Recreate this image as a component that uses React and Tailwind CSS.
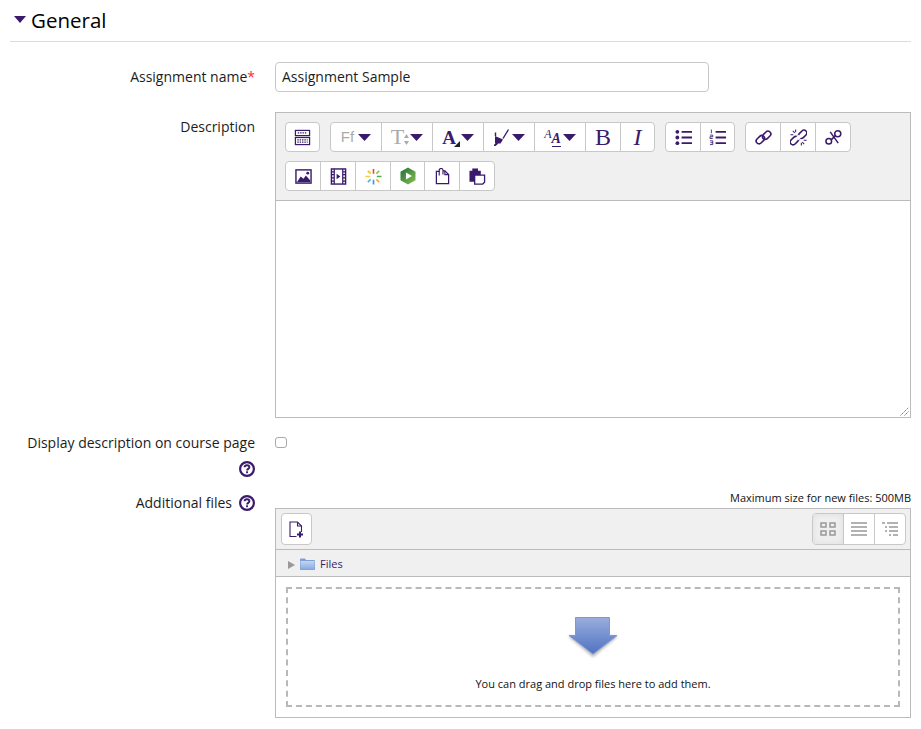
import React from "react";

const P = "#3a1a6b";

const Caret = ({ className = "", w = 13 }) => (
  <svg width={w} height="7" viewBox="0 0 13 7" preserveAspectRatio="none" className={className}>
    <path d="M0 0h13L6.5 7z" fill={P} />
  </svg>
);

const Btn = ({ w = "w-[35px]", children, last, active }) => (
  <div
    className={`${w} h-full flex items-center justify-center ${last ? "" : "border-r border-[#c8c8c8]"} ${active ? "bg-[#efefef] shadow-[inset_0_0_6px_rgba(0,0,0,0.08)]" : ""}`}
  >
    {children}
  </div>
);

const Group = ({ children, h = "h-[30px]" }) => (
  <div className={`flex w-fit ${h} bg-white border border-[#c8c8c8] rounded-[4px] overflow-hidden`}>{children}</div>
);

const Icon = ({ children, size = 17 }) => (
  <svg width={size} height={size} viewBox="0 0 18 18" fill="none" stroke={P} strokeWidth="1.6">
    {children}
  </svg>
);

const Help = () => (
  <svg width="16" height="16" viewBox="0 0 16 16">
    <circle cx="8" cy="8" r="6.9" fill="none" stroke={P} strokeWidth="2.2" />
    <path d="M5.6 6.300c0-1.300 1-2 2.400-2s2.400.8 2.400 2c0 1.700-2.300 1.500-2.300 3.100" fill="none" stroke={P} strokeWidth="1.900" />
    <rect x="7.100" y="10.300" width="1.900" height="1.900" fill={P} />
  </svg>
);

const Link = ({ mode }) => (
  <Icon>
    {mode !== "off" && (
      <>
        <rect x="8" y="3" width="10" height="6" rx="3" transform={mode === "break" ? "rotate(-45 13 6) translate(0.500 0)" : "rotate(-45 13 6) translate(-1 0)"} strokeWidth="1.700" />
        <rect x="0" y="9" width="10" height="6" rx="3" transform={mode === "break" ? "rotate(-45 5 12) translate(-0.500 0)" : "rotate(-45 5 12) translate(1 0)"} strokeWidth="1.700" />
      </>
    )}
    {mode === "break" && (
      <>
        <rect x="7" y="7" width="4" height="4" fill="#ffffff" stroke="none" transform="rotate(-45 9 9)" />
        <path d="M3 2l2 2M0.500 6h3M15 16l-2-2M17.500 12h-3M6 0.500v3M12 17.500v-3" strokeWidth="1.100" />
      </>
    )}
    {mode === "off" && (
      <>
        <circle cx="4" cy="13" r="3" />
        <circle cx="13.500" cy="5" r="3.200" />
        <path d="M5.500 3 14 15M6.500 11.500l4.500-4.500" />
      </>
    )}
  </Icon>
);

export default function App() {
  return (
    <div className="w-[921px] h-[729px] overflow-hidden bg-white text-[14px] text-[#1c1c1c] font-['Open_Sans',sans-serif]">
      <div className="mx-[10px] h-[42px] border-b border-[#dcdcdc] flex items-center pl-[4px] pb-[2px]">
        <Caret w={12} className="mr-[5px]" />
        <h2 className="text-[20.5px] leading-[30px] text-black">General</h2>
      </div>

      <div className="flex mt-[20px] h-[30px]">
        <label className="w-[255px] text-right leading-[30px]">
          Assignment name<span className="text-[#ff2a2a]">*</span>
        </label>
        <div className="ml-[20px] w-[434px] h-[30px] border border-[#c8c8c8] rounded-[4px] px-[6px] leading-[28px]">
          Assignment Sample
        </div>
      </div>

      <div className="flex mt-[20px]">
        <label className="w-[255px] text-right leading-[30px]">Description</label>
        <div className="relative ml-[20px] w-[636px] h-[306px] border border-[#bbbbbb] flex flex-col">
          <div className="h-[88px] bg-[#f0f0f0] border-b border-[#bbbbbb] pl-[9px] pt-[9px] flex flex-col gap-[9px]">
            <div className="flex gap-[10px]">
              <Group>
                <Btn w="w-[33px]" last>
                  <Icon>
                    <rect x="1.500" y="1.500" width="15" height="5.500" strokeWidth="1.300" />
                    <rect x="1.500" y="9" width="15" height="7.500" strokeWidth="1.300" />
                    <path d="M4 4.200h10M3.500 11.500h11M3.500 14h11" strokeDasharray="1.500 1" strokeWidth="1.300" />
                  </Icon>
                </Btn>
              </Group>
              <Group>
                <Btn w="w-[51px]">
                  <span className="text-[#aaaaaa] text-[15px] font-['Liberation_Sans',sans-serif] mr-[4px]">Ff</span>
                  <Caret />
                </Btn>
                <Btn w="w-[51px]">
                  <span className="text-[#aaaaaa] text-[22px] leading-none font-['Liberation_Serif',serif]">T</span>
                  <svg width="5" height="11" viewBox="0 0 5 11" className="mt-[5px] mr-[1px]">
                    <path d="M2.500 0l2.500 4H0zM2.500 11L0 7h5z" fill="#aaaaaa" />
                  </svg>
                  <Caret />
                </Btn>
                <Btn w="w-[51px]">
                  <span className="relative text-[#3a1a6b] text-[19px] font-bold leading-none font-['Liberation_Serif',serif] mr-[5px]">
                    A
                    <span className="absolute right-[-4px] bottom-[0px] w-0 h-0 border-l-[6px] border-l-transparent border-b-[6px] border-b-[#222222]" />
                  </span>
                  <Caret />
                </Btn>
                <Btn w="w-[51px]">
                  <svg width="16" height="18" viewBox="0 0 16 18" className="mr-[2px]">
                    <path d="M1 8l8 3.500-2.500 4L1 15.500z" fill={P} />
                    <path d="M0 18l3.500-3" stroke={P} strokeWidth="2" />
                    <path d="M9 10.500L14.500 1.500" stroke={P} strokeWidth="1.400" />
                    <path d="M1.500 4.500V8" stroke={P} strokeWidth="1.400" />
                  </svg>
                  <Caret />
                </Btn>
                <Btn w="w-[51px]">
                  <span className="flex items-start text-[#3a1a6b] italic leading-none font-['Liberation_Serif',serif] mr-[2px]">
                    <span className="text-[12px]">A</span>
                    <span className="text-[14px] mt-[4px] border-b border-[#3a1a6b] font-bold">A</span>
                  </span>
                  <Caret />
                </Btn>
                <Btn w="w-[35px]">
                  <span className="text-[#3a1a6b] text-[24px] leading-none font-['Liberation_Serif',serif]">B</span>
                </Btn>
                <Btn w="w-[33px]" last>
                  <span className="text-[#3a1a6b] text-[24px] italic leading-none font-['Liberation_Serif',serif]">I</span>
                </Btn>
              </Group>
              <Group>
                <Btn>
                  <Icon>
                    <circle cx="2.500" cy="3" r="2" fill={P} stroke="none" />
                    <circle cx="2.500" cy="9" r="2" fill={P} stroke="none" />
                    <circle cx="2.500" cy="15" r="2" fill={P} stroke="none" />
                    <path d="M7 3h11M7 9h11M7 15h11" strokeWidth="2" />
                  </Icon>
                </Btn>
                <Btn w="w-[33px]" last>
                  <Icon>
                    <path d="M7 3h11M7 9h11M7 15h11" strokeWidth="2" />
                    <path d="M2.500 0.500v4M1 6.500h3v1.700H1V10h3M1 12.500h3v4H1M1.500 14.500H4" strokeWidth="0.900" />
                  </Icon>
                </Btn>
              </Group>
              <Group>
                <Btn>
                  <Link mode="" />
                </Btn>
                <Btn>
                  <Link mode="break" />
                </Btn>
                <Btn w="w-[34px]" last>
                  <Link mode="off" />
                </Btn>
              </Group>
            </div>
            <Group>
              <Btn>
                <Icon>
                  <rect x="1" y="2" width="16" height="14" strokeWidth="1.500" />
                  <path d="M2 15l4-6 3 2.500 2.500-3.500L16 13v2z" fill={P} stroke="none" />
                  <circle cx="13.500" cy="5.500" r="1.500" fill={P} stroke="none" />
                </Icon>
              </Btn>
              <Btn>
                <Icon>
                  <rect x="1.500" y="1" width="15" height="16" strokeWidth="1.500" />
                  <path d="M4.500 1v16M13.500 1v16M1.500 4h3M1.500 7h3M1.500 10.500h3M1.500 14h3M13.500 4h3M13.500 7h3M13.500 10.500h3M13.500 14h3" strokeWidth="1.300" />
                  <path d="M7 6l4 3-4 3z" fill={P} stroke="none" />
                </Icon>
              </Btn>
              <Btn>
                <svg width="17" height="17" viewBox="0 0 18 18" strokeWidth="1.700">
                  <path d="M9 1v5" stroke="#e0473f" />
                  <path d="M12 6l3-3" stroke="#8bc34a" />
                  <path d="M12.500 9h5" stroke="#4caf50" />
                  <path d="M12 12l3 3" stroke="#f5a941" />
                  <path d="M9 12.500v5" stroke="#3498db" />
                  <path d="M6 12l-3 3" stroke="#5dade2" />
                  <path d="M0.500 9h5" stroke="#f4d03f" />
                  <path d="M6 6L3 3" stroke="#f1c40f" />
                </svg>
              </Btn>
              <Btn w="w-[34px]">
                <svg width="16" height="18" viewBox="0 0 16 18">
                  <defs>
                    <linearGradient id="hex" x1="0" y1="0" x2="1" y2="1">
                      <stop offset="0" stopColor="#1f6f36" />
                      <stop offset="1" stopColor="#8cc152" />
                    </linearGradient>
                  </defs>
                  <path d="M8 0.500l7.500 4.200v8.600L8 17.500.5 13.300V4.700z" fill="url(#hex)" />
                  <path d="M6 5.500l6 3.500-6 3.500z" fill="#ffffff" />
                </svg>
              </Btn>
              <Btn>
                <Icon>
                  <path d="M6 3.500H2.500v13h13V7l-4-4H9.500" strokeWidth="1.300" />
                  <path d="M5.500 8V2.500a2 2 0 0 1 4 0V7" strokeWidth="1.200" />
                  <path d="M11.500 3v4h4" strokeWidth="1.200" />
                </Icon>
              </Btn>
              <Btn w="w-[34px]" last>
                <Icon>
                  <path d="M0.500 3h12v11.500h-12z" fill={P} stroke="none" />
                  <rect x="3.500" y="0.500" width="6" height="3.500" fill={P} stroke="none" />
                  <path d="M6 7.500h10.500V15l-2 2H6z" fill="#ffffff" strokeWidth="1.400" />
                </Icon>
              </Btn>
            </Group>
          </div>
          <svg width="9" height="9" viewBox="0 0 9 9" className="absolute right-[1px] bottom-[1px]" stroke="#777777" strokeWidth="1" strokeDasharray="1.500 0.700">
            <path d="M0.500 8.500L8.500 0.500M4.500 8.500L8.500 4.500" />
          </svg>
        </div>
      </div>

      <div className="flex mt-[15px] h-[53px]">
        <div className="w-[255px] flex flex-col items-end">
          <label className="leading-[20px]">Display description on course page</label>
          <div className="mt-[8px]">
            <Help />
          </div>
        </div>
        <div className="ml-[20px] mt-[4px] w-[12px] h-[11px] border border-[#a8a8a8] rounded-[3px]" />
      </div>

      <div className="flex mt-[6px]">
        <div className="w-[255px] flex justify-end items-start gap-[7px] pt-[1px]">
          <label className="leading-[20px]">Additional files</label>
          <div className="mt-[2px]">
            <Help />
          </div>
        </div>
        <div className="ml-[20px] w-[636px]">
          <div className="text-right text-[11px] leading-[14px] h-[15px] pt-[1px] mt-[-2px] text-[#111111]">
            Maximum size for new files: 500MB
          </div>
          <div className="mt-[3px] h-[210px] border border-[#bbbbbb] flex flex-col">
            <div className="h-[41px] bg-[#f0f0f0] border-b border-[#bbbbbb] flex items-center justify-between pl-[5px] pr-[4px]">
              <Group h="h-[32px]">
                <Btn w="w-[29px]" last>
                  <svg width="15" height="17" viewBox="0 0 15 17" fill="none" stroke={P} strokeWidth="1.100">
                    <path d="M7.500 15.500H1V1h7.500l4 4v6" />
                    <path d="M8.500 1v4h4" />
                    <path d="M11 10.500v6M8 13.500h6" strokeWidth="2" />
                  </svg>
                </Btn>
              </Group>
              <Group h="h-[32px]">
                <Btn w="w-[31px]" active>
                  <svg width="16" height="14" viewBox="0 0 16 14" fill="none" stroke="#999999" strokeWidth="1.500">
                    <rect x="1" y="1" width="5" height="4" />
                    <rect x="10" y="1" width="5" height="4" />
                    <rect x="1" y="9" width="5" height="4" />
                    <rect x="10" y="9" width="5" height="4" />
                  </svg>
                </Btn>
                <Btn w="w-[31px]">
                  <svg width="16" height="14" viewBox="0 0 16 14" stroke="#999999" strokeWidth="1.500">
                    <path d="M0 1h16M0 5h16M0 9h16M0 13h16" />
                  </svg>
                </Btn>
                <Btn w="w-[30px]" last>
                  <svg width="16" height="14" viewBox="0 0 16 14" stroke="#999999" strokeWidth="1.500">
                    <path d="M0 1h3M5 1h11M3 5h2M7 5h9M3 9h2M7 9h9M7 13h2M11 13h5" />
                  </svg>
                </Btn>
              </Group>
            </div>
            <div className="h-[27px] bg-[#f0f0f0] border-b border-[#bbbbbb] flex items-center pl-[12px] pt-[3px] text-[11px] text-[#3a1a6b]">
              <svg width="7" height="8" viewBox="0 0 7 8" className="mr-[5px]">
                <path d="M0 0l7 4-7 4z" fill="#999999" />
              </svg>
              <svg width="15" height="12" viewBox="0 0 15 12" className="mr-[5px] mt-[-2px]">
                <defs>
                  <linearGradient id="fold" x1="0" y1="0" x2="0" y2="1">
                    <stop offset="0" stopColor="#c5d7f2" />
                    <stop offset="1" stopColor="#86a8e0" />
                  </linearGradient>
                </defs>
                <path d="M0 1.500a1 1 0 0 1 1-1h4l1 1.500h8a1 1 0 0 1 1 1V11a1 1 0 0 1-1 1H1a1 1 0 0 1-1-1z" fill="#7f9fd6" />
                <rect x="0.500" y="3" width="14" height="8.500" fill="url(#fold)" />
              </svg>
              Files
            </div>
            <div className="flex-1 p-[10px]">
              <div className="h-full border-2 border-dashed border-[#b8b8b8] flex flex-col items-center pt-[28px]">
                <svg width="52" height="44" viewBox="0 0 52 44">
                  <defs>
                    <linearGradient id="drop" x1="0" y1="0" x2="0" y2="1">
                      <stop offset="0" stopColor="#9aaedd" />
                      <stop offset="1" stopColor="#4f72c2" />
                    </linearGradient>
                    <filter id="soft" x="-20%" y="-20%" width="140%" height="140%">
                      <feGaussianBlur stdDeviation="1.500" />
                    </filter>
                  </defs>
                  <path d="M1 19h50L26 40z" fill="#000000" opacity="0.3" filter="url(#soft)" />
                  <path d="M8.500 18.500V0.500h34v18H50L26 37 2 18.500z" fill="url(#drop)" stroke="#7d97d3" strokeWidth="1" />
                </svg>
                <div className="mt-[15px] text-[11px] leading-[16px] text-[#111111]">You can drag and drop files here to add them.</div>
              </div>
            </div>
          </div>
        </div>
      </div>
    </div>
  );
}
